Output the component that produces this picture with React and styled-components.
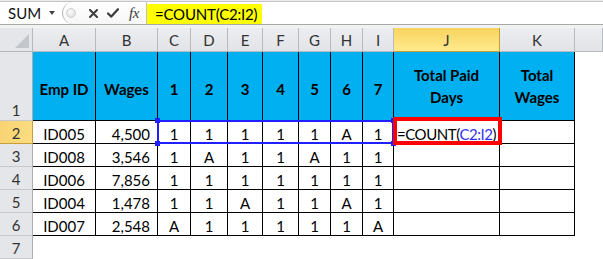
import React from 'react';
import styled, { createGlobalStyle, css } from 'styled-components';

const GlobalStyle = createGlobalStyle`
  html, body { margin: 0; padding: 0; background: #fff; }
  body { font-family: Lato, "Liberation Sans", sans-serif; }
  * { box-sizing: border-box; }
`;

const Page = styled.div`
  width: 603px;
  height: 259px;
  overflow: hidden;
  background: #fff;
  display: flex;
  flex-direction: column;
`;

const TopEdge = styled.div`
  height: 1px;
  background: #ebebeb;
`;

const FormulaBar = styled.div`
  display: flex;
  height: 25px;
  border-top: 1px solid #c6c6c6;
  border-bottom: 1px solid #a8a8a8;
  background: #fff;
`;

const NameBox = styled.div`
  width: 62px;
  display: flex;
  align-items: center;
  padding-left: 8px;
  font-size: 15px;
  color: #111;
`;

const DropArrow = styled.span`
  margin-left: auto;
  margin-right: 7px;
  width: 0;
  height: 0;
  border-left: 3.5px solid transparent;
  border-right: 3.5px solid transparent;
  border-top: 4px solid #444;
`;

const FnButtons = styled.div`
  width: 85px;
  display: flex;
  align-items: center;
  border-left: 1px solid #bcbcbc;
  border-right: 1px solid #c4c4c4;
  border-radius: 12px 0 0 12px;
  background: linear-gradient(#fff, #f6f6f6);
  color: #3a3a3a;
`;

const Knob = styled.span`
  width: 10px;
  height: 10px;
  margin-left: 3px;
  border-radius: 50%;
  border: 1px solid #cfcfcf;
  background: radial-gradient(circle at 40% 35%, #fafafa, #d9d9d9);
`;

const IconSlot = styled.span`
  display: flex;
  margin-left: ${p => p.$gap}px;
`;

const Fx = styled.span`
  margin-left: 10px;
  font-family: "Liberation Serif", "DejaVu Serif", serif;
  font-style: italic;
  font-size: 15px;
  color: #3a3a3a;
  letter-spacing: -0.5px;
`;

const FormulaInput = styled.div`
  flex: 1;
  display: flex;
  align-items: flex-end;
`;

const Highlight = styled.div`
  width: 115px;
  height: 20px;
  background: #ffff00;
  padding-left: 8px;
  display: flex;
  align-items: center;
  font-size: 15px;
  letter-spacing: -0.2px;
  color: #000;
`;

const Spacer = styled.div`
  height: 3px;
  background: #f1f2f4;
`;

const Sheet = styled.div`
  display: grid;
  grid-template-columns: 33px 63px 62px 33px 37px 35px 36px 32px 32px 31px 106px 75px 1fr;
  grid-template-rows: 24px 69px repeat(6, 23px);
  font-size: 15px;
`;

const place = css`
  grid-row: ${p => p.$r};
  grid-column: ${p => p.$c};
`;

const Corner = styled.div`
  ${place};
  background: #e4e6ea;
  border-right: 1px solid #b5b8bd;
  border-bottom: 1px solid #b5b8bd;
  position: relative;
  &::after {
    content: '';
    position: absolute;
    right: 3px;
    bottom: 3px;
    border-left: 14px solid transparent;
    border-bottom: 14px solid #c3c6cb;
  }
`;

const ColHead = styled.div`
  ${place};
  display: flex;
  align-items: center;
  justify-content: center;
  color: #333;
  background: ${p => (p.$active ? 'linear-gradient(#f9d35f, #ffea8c)' : 'linear-gradient(#eceef1, #e1e3e7)')};
  border-right: 1px solid ${p => (p.$active ? '#c79f3a' : '#b7babf')};
  border-bottom: 1px solid ${p => (p.$active ? '#c79f3a' : '#b7babf')};
  padding-top: 1px;
`;

const RowHead = styled.div`
  ${place};
  display: flex;
  align-items: flex-end;
  justify-content: center;
  line-height: 18px;
  padding-bottom: 1px;
  color: #333;
  background: ${p => (p.$active ? 'linear-gradient(90deg, #f9d474, #fbdc80)' : '#e4e6ea')};
  border-right: 1px solid ${p => (p.$active ? '#c79f3a' : '#a9acb1')};
  border-bottom: 1px solid ${p => (p.$active ? '#c79f3a' : '#c6c8cc')};
`;

const HeadCell = styled.div`
  ${place};
  display: flex;
  align-items: center;
  justify-content: center;
  text-align: center;
  background: #00b0f0;
  color: #000;
  font-weight: 700;
  line-height: 22px;
  padding: ${p => (p.$single ? '6px 3px 0' : '0 3px')};
  border-right: 1px solid #000;
  border-bottom: 1px solid #000;
`;

const DataCell = styled.div`
  ${place};
  display: flex;
  align-items: flex-end;
  justify-content: ${p => (p.$align === 'right' ? 'flex-end' : p.$align === 'left' ? 'flex-start' : 'center')};
  padding: ${p => (p.$align === 'right' ? '0 7px 0 0' : p.$align === 'left' ? '0 0 0 3px' : '0')};
  line-height: 18px;
  white-space: nowrap;
  color: #000;
  background: #fff;
  border-right: 1px solid #000;
  border-bottom: 1px solid #000;
`;

const FormulaText = styled.span`
  letter-spacing: -0.45px;
`;

const Ref = styled.span`
  color: #3333f0;
`;

const Selection = styled.div`
  ${place};
  margin: -1px 0 0 -1px;
  border: 2px solid #2020ff;
  position: relative;
  z-index: 2;
  pointer-events: none;
`;

const Handle = styled.span`
  position: absolute;
  width: 5px;
  height: 5px;
  background: #2020ff;
  ${p => (p.$v === 'top' ? 'top: -4px;' : 'bottom: -4px;')}
  ${p => (p.$h === 'left' ? 'left: -4px;' : 'right: -4px;')}
`;

const Callout = styled.div`
  ${place};
  margin: -4px -2px -1px -1px;
  border: 4px solid #ff0000;
  z-index: 3;
  pointer-events: none;
`;

const CrossIcon = () => (
  <svg width="9" height="9" viewBox="0 0 9 9">
    <path d="M1 1 L8 8 M8 1 L1 8" stroke="#3a3a3a" strokeWidth="2" strokeLinecap="round" />
  </svg>
);

const CheckIcon = () => (
  <svg width="12" height="10" viewBox="0 0 12 10">
    <path d="M1 5.5 L4.3 8.6 L11 1.2" stroke="#3a3a3a" strokeWidth="2.2" fill="none" strokeLinejoin="round" strokeLinecap="round" />
  </svg>
);

const columns = ['A', 'B', 'C', 'D', 'E', 'F', 'G', 'H', 'I', 'J', 'K', ''];
const headers = [
  { t: 'Emp ID', single: true },
  { t: 'Wages', single: true },
  { t: '1', single: true },
  { t: '2', single: true },
  { t: '3', single: true },
  { t: '4', single: true },
  { t: '5', single: true },
  { t: '6', single: true },
  { t: '7', single: true },
  { t: 'Total Paid Days' },
  { t: 'Total Wages' },
];
const rows = [
  ['ID005', '4,500', '1', '1', '1', '1', '1', 'A', '1'],
  ['ID008', '3,546', '1', 'A', '1', '1', 'A', '1', '1'],
  ['ID006', '7,856', '1', '1', '1', '1', '1', '1', '1'],
  ['ID004', '1,478', '1', '1', 'A', '1', '1', 'A', '1'],
  ['ID007', '2,548', 'A', '1', '1', '1', '1', '1', 'A'],
];

export default function App() {
  return (
    <Page>
      <GlobalStyle />
      <TopEdge />
      <FormulaBar>
        <NameBox>
          SUM
          <DropArrow />
        </NameBox>
        <FnButtons>
          <Knob />
          <IconSlot $gap={13}><CrossIcon /></IconSlot>
          <IconSlot $gap={9}><CheckIcon /></IconSlot>
          <Fx>fx</Fx>
        </FnButtons>
        <FormulaInput>
          <Highlight>=COUNT(C2:I2)</Highlight>
        </FormulaInput>
      </FormulaBar>
      <Spacer />
      <Sheet>
        <Corner $r={1} $c={1} />
        {columns.map((c, i) => (
          <ColHead key={'ch' + i} $r={1} $c={i + 2} $active={c === 'J'}>{c}</ColHead>
        ))}

        <RowHead $r={2} $c={1}>1</RowHead>
        {headers.map((h, i) => (
          <HeadCell key={'h' + i} $r={2} $c={i + 2} $single={h.single}>{h.t}</HeadCell>
        ))}

        {rows.map((row, ri) => (
          <React.Fragment key={'r' + ri}>
            <RowHead $r={ri + 3} $c={1} $active={ri === 0}>{ri + 2}</RowHead>
            {row.map((v, ci) => (
              <DataCell key={ci} $r={ri + 3} $c={ci + 2} $align={ci === 1 ? 'right' : 'center'}>{v}</DataCell>
            ))}
            <DataCell $r={ri + 3} $c={11} $align="left">
              {ri === 0 ? (<FormulaText>=COUNT(<Ref>C2:I2</Ref>)</FormulaText>) : null}
            </DataCell>
            <DataCell $r={ri + 3} $c={12} />
          </React.Fragment>
        ))}

        <RowHead $r={8} $c={1}>7</RowHead>

        <Selection $r={3} $c="4 / 11">
          <Handle $v="top" $h="left" />
          <Handle $v="bottom" $h="left" />
          <Handle $v="top" $h="right" />
          <Handle $v="bottom" $h="right" />
        </Selection>
        <Callout $r={3} $c={11} />
      </Sheet>
    </Page>
  );
}
